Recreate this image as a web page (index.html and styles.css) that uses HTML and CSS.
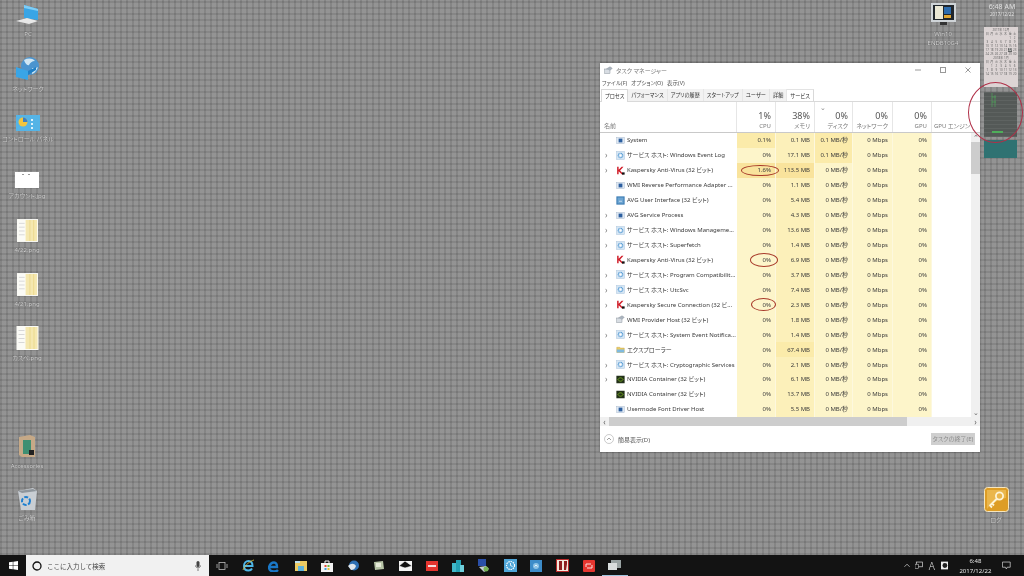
FILE: index.html
```html
<!DOCTYPE html>
<html lang="ja">
<head>
<meta charset="utf-8">
<title>タスク マネージャー</title>
<link rel="stylesheet" href="styles.css">
</head>
<body>
<svg class="defs" width="0" height="0" aria-hidden="true">
  <symbol id="i-sys" viewBox="0 0 12 12"><rect x="1" y="2" width="10" height="8" fill="#dfe8f2" stroke="#9fb4c9" stroke-width=".6"/><rect x="3.5" y="3.5" width="5" height="5" fill="#2c5fa0"/></symbol>
  <symbol id="i-svc" viewBox="0 0 12 12"><rect x=".5" y=".5" width="11" height="11" fill="#d6e6f4" stroke="#a9c4dc" stroke-width=".6"/><circle cx="6" cy="6" r="3" fill="none" stroke="#5c9fd6" stroke-width="1.6" stroke-dasharray="1.4 .5"/><circle cx="6" cy="6" r="1.2" fill="#fff"/></symbol>
  <symbol id="i-kas" viewBox="0 0 12 12"><path d="M1.5 1v10h2V7l4 4h2.500L5.500 6l4.500-5H7.500l-4 4V1z" fill="#d0202c"/><rect x="8" y="8.500" width="3.500" height="3" fill="#111"/></symbol>
  <symbol id="i-avg" viewBox="0 0 12 12"><rect x=".5" y=".5" width="11" height="11" fill="#3d7db5"/><rect x="2" y="2" width="8" height="8" fill="#6da5d2"/><path d="M4 7h4" stroke="#dbe9f5"/></symbol>
  <symbol id="i-wmi" viewBox="0 0 12 12"><rect x="1" y="4" width="7" height="6" fill="#d8dde3" stroke="#808a94" stroke-width=".6"/><path d="M3 4 8 1l3 2-3 3" fill="#aab4be" stroke="#808a94" stroke-width=".5"/></symbol>
  <symbol id="i-exp" viewBox="0 0 12 12"><path d="M1 3h4l1 1h5v6H1z" fill="#eccb63" stroke="#bd9b3a" stroke-width=".5"/><rect x="1" y="6" width="10" height="4" fill="#7fbadf"/></symbol>
  <symbol id="i-nv" viewBox="0 0 12 12"><rect x=".5" y="1" width="11" height="10" fill="#23301a"/><path d="M2.500 6c2-3 5-3 7 0-2 3-5 3-7 0z" fill="none" stroke="#79b51c" stroke-width="1.100"/></symbol>
  <symbol id="i-doc" viewBox="0 0 22 24"><rect width="22" height="24" fill="#fbfbf6"/><rect x="9" y="1" width="12" height="22" fill="#f5e8b0"/><rect x="13" y="1" width="1" height="22" fill="#ecd98e"/><rect x="17" y="1" width="1" height="22" fill="#ecd98e"/><rect x="2" y="4" width="6" height="1" fill="#d8d8d8"/><rect x="2" y="8" width="6" height="1" fill="#d8d8d8"/><rect x="2" y="12" width="6" height="1" fill="#d8d8d8"/><rect x="2" y="16" width="6" height="1" fill="#d8d8d8"/></symbol>
</svg>

<main class="desktop">
  <div class="dicon pos-pc">
    <svg class="dglyph" width="24" height="22" viewBox="0 0 24 22"><path d="M8 1l14 4v11L8 14z" fill="#39a5e6"/><path d="M8 1l14 4v2L8 4z" fill="#7fcdf6"/><path d="M0 17l11-3 11 3-9 3z" fill="#e8e8e8"/></svg>
    <span class="dlabel">PC</span>
  </div>
  <div class="dicon pos-net">
    <svg class="dglyph" width="26" height="24" viewBox="0 0 26 24"><circle cx="15" cy="9" r="9" fill="#4b94cf"/><path d="M9 3c4-2 8-2 11 1-3 0-5 2-6 4-2 1-4-2-5-5zM17 11c3 0 5 0 6-1-1 3-3 6-6 7z" fill="#cfe6f4"/><path d="M1 10l12 4v9L1 20z" fill="#39a5e6"/><path d="M13 14l8-4v3l-8 5z" fill="#1f7fc6"/></svg>
    <span class="dlabel">ネットワーク</span>
  </div>
  <div class="dicon pos-cp">
    <svg class="dglyph" width="24" height="16" viewBox="0 0 24 16"><rect width="24" height="16" fill="#55b4e6"/><circle cx="7" cy="7" r="4.500" fill="#f2c53d"/><path d="M7 7V2.500A4.500 4.500 0 0 1 11.500 7z" fill="#3d7fc2"/><rect x="15" y="4" width="2" height="2" fill="#dff1fb"/><rect x="15" y="8" width="2" height="2" fill="#dff1fb"/><rect x="15" y="12" width="2" height="2" fill="#dff1fb"/></svg>
    <span class="dlabel">コントロール パネル</span>
  </div>
  <div class="dicon pos-acc">
    <svg class="dglyph" width="24" height="16" viewBox="0 0 24 16"><rect width="24" height="16" fill="#fff"/><rect x="7" y="2" width="2" height="1" fill="#999"/><rect x="13" y="2" width="2" height="1" fill="#999"/></svg>
    <span class="dlabel">アカウント.jpg</span>
  </div>
  <div class="dicon pos-p1"><svg class="dglyph" width="21" height="23"><use href="#i-doc"/></svg><span class="dlabel">4/22.png</span></div>
  <div class="dicon pos-p2"><svg class="dglyph" width="21" height="23"><use href="#i-doc"/></svg><span class="dlabel">4/21.png</span></div>
  <div class="dicon pos-p3"><svg class="dglyph" width="23" height="24"><use href="#i-doc"/></svg><span class="dlabel">カスペ.png</span></div>
  <div class="dicon pos-ac">
    <svg class="dglyph" width="18" height="23" viewBox="0 0 18 23"><path d="M1 2l11-2 5 2v20H4l-3-2z" fill="#c6a987"/><rect x="5" y="5" width="8" height="14" fill="#3f8f72"/><rect x="11" y="15" width="5" height="5" fill="#222"/></svg>
    <span class="dlabel">Accessories</span>
  </div>
  <div class="dicon pos-bin">
    <svg class="dglyph" width="20" height="22" viewBox="0 0 20 22"><path d="M1 3l15-3 4 3-2 19H4z" fill="#c9ced3"/><path d="M1 3l15-2 4 2-15 2z" fill="#8e959b"/><circle cx="9" cy="13" r="4" fill="none" stroke="#1d7fd0" stroke-width="2" stroke-dasharray="4 1.500"/></svg>
    <span class="dlabel">ごみ箱</span>
  </div>
  <div class="dicon pos-win">
    <svg class="dglyph" width="25" height="23" viewBox="0 0 25 23"><rect width="25" height="19" fill="#cfd4d8"/><rect x="2" y="2" width="21" height="15" fill="#20262c"/><rect x="4" y="3" width="8" height="13" fill="#e9e7d4"/><rect x="13" y="4" width="7" height="7" fill="#2d6cae"/><rect x="13" y="12" width="7" height="3" fill="#e2a832"/><rect x="9" y="19" width="7" height="3" fill="#333"/></svg>
    <span class="dlabel">Win10<br>ENDB10G4</span>
  </div>
  <div class="dicon pos-key">
    <svg class="dglyph" width="25" height="25" viewBox="0 0 25 25"><rect x=".5" y=".5" width="24" height="24" rx="3" fill="#dd9d26" stroke="#f6e6bf"/><path d="M3 3h19v8C15 12 8 16 3 22z" fill="#eab64c"/><circle cx="15.500" cy="9" r="3.600" fill="none" stroke="#fdf3d6" stroke-width="1.800"/><path d="M13 11.500 5.500 19M8 16.500l2 2M6 18.500l2 2" stroke="#fdf3d6" stroke-width="1.800" fill="none"/></svg>
    <span class="dlabel">ログ</span>
  </div>

  <div class="clock-widget"><div class="cw-time">6:48 AM</div><div class="cw-date">2017/12/22</div></div>
  <div class="calendar">
    <div class="cal-title">2017年 12月</div>
    <div class="cal-grid"><span>日</span><span>月</span><span>火</span><span>水</span><span>木</span><span>金</span><span>土</span><span></span><span></span><span></span><span></span><span></span><span>1</span><span>2</span><span>3</span><span>4</span><span>5</span><span>6</span><span>7</span><span>8</span><span>9</span><span>10</span><span>11</span><span>12</span><span>13</span><span>14</span><span>15</span><span>16</span><span>17</span><span>18</span><span>19</span><span>20</span><span>21</span><span class="cal-today">22</span><span>23</span><span>24</span><span>25</span><span>26</span><span>27</span><span>28</span><span>29</span><span>30</span></div>
    <div class="cal-title">2018年 1月</div>
    <div class="cal-grid"><span>日</span><span>月</span><span>火</span><span>水</span><span>木</span><span>金</span><span>土</span><span></span><span>1</span><span>2</span><span>3</span><span>4</span><span>5</span><span>6</span><span>7</span><span>8</span><span>9</span><span>10</span><span>11</span><span>12</span><span>13</span><span>14</span><span>15</span><span>16</span><span>17</span><span>18</span><span>19</span><span>20</span></div>
  </div>
  <div class="meter">
    <svg width="33" height="45" viewBox="0 0 33 45"><path d="M8 1v14M8 5h4M8 10h4M11 3v12" stroke="#4fae5a" stroke-width=".6" fill="none"/><rect x="8" y="39" width="11" height="2" fill="#4fae5a"/></svg>
  </div>
  <div class="teal"></div>

  <section class="window">
    <header class="titlebar">
      <svg width="9" height="9" viewBox="0 0 12 12"><use href="#i-wmi"/></svg>
      <span class="title">タスク マネージャー</span>
      <div class="winbtns">
        <svg width="6" height="6" viewBox="0 0 6 6"><path d="M0 3h6" stroke="#999"/></svg>
        <svg width="6" height="6" viewBox="0 0 6 6"><rect x=".5" y=".5" width="5" height="5" fill="none" stroke="#999"/></svg>
        <svg width="6" height="6" viewBox="0 0 6 6"><path d="M.5.5l5 5M5.500.5l-5 5" stroke="#999"/></svg>
      </div>
    </header>
    <nav class="menu"><span>ファイル(F)</span><span>オプション(O)</span><span>表示(V)</span></nav>
    <nav class="tabs">
      <span class="tab active">プロセス</span><span class="tab">パフォーマンス</span><span class="tab">アプリの履歴</span><span class="tab">スタートアップ</span><span class="tab">ユーザー</span><span class="tab">詳細</span><span class="tab">サービス</span>
    </nav>
    <div class="table">
      <div class="thead">
        <div class="th th-name"><span class="th-sub">名前</span></div>
        <div class="th"><span class="th-pct">1%</span><span class="th-sub">CPU</span></div>
        <div class="th"><span class="th-pct">38%</span><span class="th-sub">メモリ</span></div>
        <div class="th"><span class="sort">⌄</span><span class="th-pct">0%</span><span class="th-sub">ディスク</span></div>
        <div class="th"><span class="th-pct">0%</span><span class="th-sub">ネットワーク</span></div>
        <div class="th"><span class="th-pct">0%</span><span class="th-sub">GPU</span></div>
        <div class="th th-last"><span class="th-sub">GPU エンジン</span></div>
      </div>
      <div class="tbody">
        <div class="rows">
          <div class="row"><div class="name"><i class="ex"></i><svg class="ri"><use href="#i-sys"/></svg><span class="nm">System</span></div><div class="c h2">0.1%</div><div class="c h1">0.1 MB</div><div class="c h2">0.1 MB/秒</div><div class="c">0 Mbps</div><div class="c">0%</div></div>
          <div class="row"><div class="name"><i class="ex">›</i><svg class="ri"><use href="#i-svc"/></svg><span class="nm">サービス ホスト: Windows Event Log</span></div><div class="c">0%</div><div class="c h1">17.1 MB</div><div class="c h2">0.1 MB/秒</div><div class="c">0 Mbps</div><div class="c">0%</div></div>
          <div class="row"><div class="name"><i class="ex">›</i><svg class="ri"><use href="#i-kas"/></svg><span class="nm">Kaspersky Anti-Virus (32 ビット)</span></div><div class="c h3">1.6%</div><div class="c h3">113.5 MB</div><div class="c">0 MB/秒</div><div class="c">0 Mbps</div><div class="c">0%</div></div>
          <div class="row"><div class="name"><i class="ex"></i><svg class="ri"><use href="#i-sys"/></svg><span class="nm">WMI Reverse Performance Adapter ...</span></div><div class="c">0%</div><div class="c h1">1.1 MB</div><div class="c">0 MB/秒</div><div class="c">0 Mbps</div><div class="c">0%</div></div>
          <div class="row"><div class="name"><i class="ex"></i><svg class="ri"><use href="#i-avg"/></svg><span class="nm">AVG User Interface (32 ビット)</span></div><div class="c">0%</div><div class="c h1">5.4 MB</div><div class="c">0 MB/秒</div><div class="c">0 Mbps</div><div class="c">0%</div></div>
          <div class="row"><div class="name"><i class="ex">›</i><svg class="ri"><use href="#i-sys"/></svg><span class="nm">AVG Service Process</span></div><div class="c">0%</div><div class="c h1">4.3 MB</div><div class="c">0 MB/秒</div><div class="c">0 Mbps</div><div class="c">0%</div></div>
          <div class="row"><div class="name"><i class="ex">›</i><svg class="ri"><use href="#i-svc"/></svg><span class="nm">サービス ホスト: Windows Manageme...</span></div><div class="c">0%</div><div class="c h1">13.6 MB</div><div class="c">0 MB/秒</div><div class="c">0 Mbps</div><div class="c">0%</div></div>
          <div class="row"><div class="name"><i class="ex">›</i><svg class="ri"><use href="#i-svc"/></svg><span class="nm">サービス ホスト: Superfetch</span></div><div class="c">0%</div><div class="c h1">1.4 MB</div><div class="c">0 MB/秒</div><div class="c">0 Mbps</div><div class="c">0%</div></div>
          <div class="row"><div class="name"><i class="ex"></i><svg class="ri"><use href="#i-kas"/></svg><span class="nm">Kaspersky Anti-Virus (32 ビット)</span></div><div class="c">0%</div><div class="c h1">6.9 MB</div><div class="c">0 MB/秒</div><div class="c">0 Mbps</div><div class="c">0%</div></div>
          <div class="row"><div class="name"><i class="ex">›</i><svg class="ri"><use href="#i-svc"/></svg><span class="nm">サービス ホスト: Program Compatibilit...</span></div><div class="c">0%</div><div class="c h1">3.7 MB</div><div class="c">0 MB/秒</div><div class="c">0 Mbps</div><div class="c">0%</div></div>
          <div class="row"><div class="name"><i class="ex">›</i><svg class="ri"><use href="#i-svc"/></svg><span class="nm">サービス ホスト: UtcSvc</span></div><div class="c">0%</div><div class="c h1">7.4 MB</div><div class="c">0 MB/秒</div><div class="c">0 Mbps</div><div class="c">0%</div></div>
          <div class="row"><div class="name"><i class="ex">›</i><svg class="ri"><use href="#i-kas"/></svg><span class="nm">Kaspersky Secure Connection (32 ビ...</span></div><div class="c">0%</div><div class="c h1">2.3 MB</div><div class="c">0 MB/秒</div><div class="c">0 Mbps</div><div class="c">0%</div></div>
          <div class="row"><div class="name"><i class="ex"></i><svg class="ri"><use href="#i-wmi"/></svg><span class="nm">WMI Provider Host (32 ビット)</span></div><div class="c">0%</div><div class="c h1">1.8 MB</div><div class="c">0 MB/秒</div><div class="c">0 Mbps</div><div class="c">0%</div></div>
          <div class="row"><div class="name"><i class="ex">›</i><svg class="ri"><use href="#i-svc"/></svg><span class="nm">サービス ホスト: System Event Notifica...</span></div><div class="c">0%</div><div class="c h1">1.4 MB</div><div class="c">0 MB/秒</div><div class="c">0 Mbps</div><div class="c">0%</div></div>
          <div class="row"><div class="name"><i class="ex"></i><svg class="ri"><use href="#i-exp"/></svg><span class="nm">エクスプローラー</span></div><div class="c">0%</div><div class="c h2">67.4 MB</div><div class="c">0 MB/秒</div><div class="c">0 Mbps</div><div class="c">0%</div></div>
          <div class="row"><div class="name"><i class="ex">›</i><svg class="ri"><use href="#i-svc"/></svg><span class="nm">サービス ホスト: Cryptographic Services</span></div><div class="c">0%</div><div class="c h1">2.1 MB</div><div class="c">0 MB/秒</div><div class="c">0 Mbps</div><div class="c">0%</div></div>
          <div class="row"><div class="name"><i class="ex">›</i><svg class="ri"><use href="#i-nv"/></svg><span class="nm">NVIDIA Container (32 ビット)</span></div><div class="c">0%</div><div class="c h1">6.1 MB</div><div class="c">0 MB/秒</div><div class="c">0 Mbps</div><div class="c">0%</div></div>
          <div class="row"><div class="name"><i class="ex"></i><svg class="ri"><use href="#i-nv"/></svg><span class="nm">NVIDIA Container (32 ビット)</span></div><div class="c">0%</div><div class="c h1">13.7 MB</div><div class="c">0 MB/秒</div><div class="c">0 Mbps</div><div class="c">0%</div></div>
          <div class="row"><div class="name"><i class="ex"></i><svg class="ri"><use href="#i-sys"/></svg><span class="nm">Usermode Font Driver Host</span></div><div class="c">0%</div><div class="c h1">5.5 MB</div><div class="c">0 MB/秒</div><div class="c">0 Mbps</div><div class="c">0%</div></div>
        </div>
        <div class="vscroll"><span class="arr">⌃</span><div class="vthumb"></div><span class="arr">⌄</span></div>
      </div>
      <div class="hscroll"><span class="harr">‹</span><div class="hthumb"></div><span class="harr">›</span></div>
    </div>
    <footer class="winfoot">
      <span class="collapse"><svg width="10" height="10" viewBox="0 0 10 10"><circle cx="5" cy="5" r="4.500" fill="none" stroke="#aaa" stroke-width=".6"/><path d="M3 6l2-2 2 2" fill="none" stroke="#777" stroke-width=".7"/></svg>簡易表示(D)</span>
      <span class="endtask">タスクの終了(E)</span>
    </footer>
  </section>

  <div class="oval ov-big"></div>
  <div class="oval ov-16"></div>
  <div class="oval ov-a"></div>
  <div class="oval ov-b"></div>
</main>

<footer class="taskbar">
  <div class="start"><svg width="9" height="9" viewBox="0 0 10 10"><path d="M0 1.400 4.200.8v3.900H0zM4.800.7 10 0v4.700H4.800zM0 5.300h4.200v3.900L0 8.600zM4.800 5.300H10V10l-5.200-.7z" fill="#fff"/></svg></div>
  <div class="search">
    <svg width="10" height="10" viewBox="0 0 10 10"><circle cx="5" cy="5" r="4" fill="none" stroke="#111" stroke-width="1.300"/></svg>
    <span class="stext">ここに入力して検索</span>
    <svg width="6" height="10" viewBox="0 0 6 10"><rect x="1.500" y="0" width="3" height="6" rx="1.500" fill="#444"/><path d="M.5 4.500c0 3 5 3 5 0M3 7.500V10" stroke="#444" stroke-width=".7" fill="none"/></svg>
  </div>
  <div class="tb-apps">
    <span class="tb"><svg width="12" height="10" viewBox="0 0 12 10"><rect x="3" y="1.500" width="6" height="7" fill="none" stroke="#bbb" stroke-width=".8"/><path d="M1 3v4M11 3v4" stroke="#bbb" stroke-width=".8"/></svg></span>
    <span class="tb"><svg width="13" height="13" viewBox="0 0 13 13"><path d="M2 7h8.500C10.500 4 9 2 6.500 2S2 4 2 7c0 3 2 4.500 4.500 4.500 2 0 3-1 3.500-2" fill="none" stroke="#4fb7e8" stroke-width="2"/><path d="M1 11C3 6 8 2 12 1" stroke="#e9c53a" stroke-width=".8" fill="none"/></svg></span>
    <span class="tb"><svg width="12" height="12" viewBox="0 0 12 12"><path d="M1 7h8C9 4 8 2.500 6 2.500S2 4 1 7c0 3 2 4.500 5 4.500 2 0 3-.5 4-1.500" fill="none" stroke="#1a78c8" stroke-width="2.400"/></svg></span>
    <span class="tb"><svg width="12" height="11" viewBox="0 0 12 11"><rect y="1" width="12" height="10" fill="#eccb63"/><rect x="3" y="6" width="6" height="5" fill="#5fb3dc"/><rect y="1" width="5" height="2" fill="#bde0ee"/></svg></span>
    <span class="tb"><svg width="12" height="12" viewBox="0 0 12 12"><rect y="3" width="12" height="9" fill="#f3f3f3"/><path d="M4 3V1h4v2" fill="none" stroke="#f3f3f3"/><rect x="3.500" y="5" width="2" height="2" fill="#e34a3a"/><rect x="6.500" y="5" width="2" height="2" fill="#6cba3f"/><rect x="3.500" y="8" width="2" height="2" fill="#3c9fdb"/><rect x="6.500" y="8" width="2" height="2" fill="#e9bd32"/></svg></span>
    <span class="tb"><svg width="13" height="13" viewBox="0 0 13 13"><circle cx="7" cy="6.500" r="5" fill="#2d6fb3"/><path d="M1 7c3-3 6-3 8 0-1 3-3 4-5 4z" fill="#dfe6ec"/></svg></span>
    <span class="tb"><svg width="12" height="11" viewBox="0 0 12 11"><path d="M1 2l9-1 1 8-9 1z" fill="#b7c4a6"/><rect x="3" y="3" width="5" height="4" fill="#e6ead9"/></svg></span>
    <span class="tb"><svg width="13" height="10" viewBox="0 0 13 10"><rect width="13" height="10" fill="#f4f4f4"/><path d="M0 5l6-5 7 5-7 2z" fill="#111" stroke="#fff" stroke-width=".6"/></svg></span>
    <span class="tb"><svg width="12" height="10" viewBox="0 0 12 10"><rect width="12" height="10" fill="#e5352f"/><rect x="2" y="4" width="8" height="2" fill="#f7dede"/></svg></span>
    <span class="tb"><svg width="12" height="12" viewBox="0 0 12 12"><rect x="0" y="3" width="5" height="9" fill="#3fb8c9"/><rect x="4" y="0" width="5" height="12" fill="#23a0b3"/><rect x="8" y="5" width="4" height="7" fill="#6fd0dc"/></svg></span>
    <span class="tb"><svg width="13" height="13" viewBox="0 0 13 13"><rect x="1" y="0" width="8" height="7" fill="#2a4fa8"/><path d="M2 8l7-1 3 3-5 3z" fill="#c5ced6"/><circle cx="9" cy="10" r="2.500" fill="#77b255"/></svg></span>
    <span class="tb"><svg width="13" height="13" viewBox="0 0 13 13"><rect width="13" height="13" fill="#4fa6d9"/><circle cx="6.500" cy="6.500" r="4" fill="none" stroke="#fff" stroke-width="1.200" stroke-dasharray="1.500 .8"/><path d="M6.500 4v2.500l2 1" stroke="#fff" fill="none" stroke-width=".8"/></svg></span>
    <span class="tb"><svg width="12" height="12" viewBox="0 0 12 12"><rect width="12" height="12" fill="#3d8cc9"/><circle cx="6" cy="6" r="3" fill="#8dc3e6"/><path d="M4.500 6.500 6 5l1.500 1.500" stroke="#fff" fill="none" stroke-width=".8"/></svg></span>
    <span class="tb"><svg width="13" height="13" viewBox="0 0 13 13"><rect width="13" height="13" fill="#b92a2a"/><rect x="1" y="1" width="11" height="11" fill="#f3e9dd"/><path d="M3 2h3v9H3zM8 2h3v3l-1 6H8z" fill="#8e1e1e"/></svg></span>
    <span class="tb"><svg width="12" height="12" viewBox="0 0 12 12"><rect width="12" height="12" rx="1" fill="#e5352f"/><path d="M3 7V4h5M9 5v3H4" stroke="#f7dede" fill="none"/></svg></span>
    <span class="tb tb-active"><svg width="13" height="11" viewBox="0 0 13 11"><rect x="3" y="0" width="10" height="8" fill="#9aa3a3"/><rect x="0" y="3" width="9" height="7" fill="#d9dddd"/></svg></span>
  </div>
  <div class="tray">
    <svg width="7" height="5" viewBox="0 0 7 5"><path d="M.5 4 3.500 1l3 3" fill="none" stroke="#ddd" stroke-width=".8"/></svg>
    <svg width="9" height="9" viewBox="0 0 9 9"><rect x="1.500" y="0.500" width="7" height="5.500" fill="none" stroke="#ddd" stroke-width=".8"/><rect x="0" y="3" width="4" height="5" fill="#111" stroke="#ddd" stroke-width=".6"/></svg>
    <span class="ime">A</span>
    <svg width="9" height="9" viewBox="0 0 9 9"><rect width="9" height="9" fill="#f0f0f0"/><circle cx="4.500" cy="4.500" r="2.800" fill="#222"/></svg>
    <div class="tclock"><span>6:48</span><span>2017/12/22</span></div>
    <svg width="10" height="9" viewBox="0 0 10 9"><path d="M.5.500h9v6H6l-1 2-1-2H.5z" fill="none" stroke="#ddd" stroke-width=".8"/></svg>
  </div>
</footer>
</body>
</html>
```
FILE: styles.css
```css
* { box-sizing: border-box; }
html, body { margin: 0; height: 100%; }
body {
  width: 1024px;
  height: 576px;
  overflow: hidden;
  display: flex;
  flex-direction: column;
  font-family: "Noto Sans", "Noto Sans CJK JP", sans-serif;
  font-feature-settings: "palt";
  color: #333;
  filter: blur(.25px);
}
.defs { position: absolute; }

.desktop {
  flex: 1;
  position: relative;
  background-color: #8b8b8b;
  background-image:
    repeating-linear-gradient(90deg, rgba(60,60,60,.13) 0 2px, rgba(255,255,255,.04) 2px 6px),
    repeating-linear-gradient(0deg, rgba(60,60,60,.13) 0 2px, rgba(255,255,255,.04) 2px 6px);
}

/* desktop icons sit on a free canvas */
.dicon {
  position: absolute;
  width: 60px;
  display: flex;
  flex-direction: column;
  align-items: center;
  gap: 4px;
}
.dlabel {
  font-size: 6px;
  line-height: 9px;
  color: #dcdcdc;
  text-align: center;
  text-shadow: 0 0 1px #333;
  white-space: nowrap;
}
.pos-pc { left: -2px; top: 4px; }
.pos-net { left: -2px; top: 57px; }
.pos-cp { left: -2px; top: 115px; }
.pos-acc { left: -3px; top: 172px; }
.pos-p1 { left: -3px; top: 219px; }
.pos-p2 { left: -3px; top: 273px; }
.pos-p3 { left: -3px; top: 326px; }
.pos-ac { left: -3px; top: 435px; }
.pos-bin { left: -3px; top: 488px; }
.pos-win { left: 913px; top: 3px; }
.pos-key { left: 966px; top: 487px; }

.clock-widget {
  position: absolute;
  left: 980px;
  top: 2px;
  width: 44px;
  text-align: center;
  color: #e0e0e0;
}
.cw-time { font-size: 7px; line-height: 9px; }
.cw-date { font-size: 4.500px; line-height: 6px; }

.calendar {
  position: absolute;
  left: 984px;
  top: 27px;
  width: 34px;
  height: 60px;
  background: #dcd4d4;
  color: #666;
  font-size: 3px;
  line-height: 4px;
  padding: 1px;
}
.cal-title { text-align: center; }
.cal-grid { display: grid; grid-template-columns: repeat(7, 1fr); text-align: center; }
.cal-today { background: #666; color: #fff; }

.meter {
  position: absolute;
  left: 984px;
  top: 92px;
  width: 33px;
  height: 45px;
  background-color: #545957;
  background-image: repeating-linear-gradient(0deg, rgba(255,255,255,.06) 0 1px, transparent 1px 4px);
}
.meter svg { display: block; }
.teal {
  position: absolute;
  left: 984px;
  top: 140px;
  width: 33px;
  height: 18px;
  background: #2f7272;
}

/* window */
.window {
  position: absolute;
  left: 600px;
  top: 63px;
  width: 380px;
  height: 389px;
  background: #fff;
  display: flex;
  flex-direction: column;
  box-shadow: 0 0 2px rgba(0,0,0,.4);
  font-size: 6px;
}
.titlebar {
  height: 14px;
  display: flex;
  align-items: center;
  gap: 3px;
  padding: 0 0 0 4px;
  color: #777;
}
.winbtns {
  margin-left: auto;
  display: flex;
  gap: 19px;
  padding-right: 9px;
}
.winbtns svg { display: block; }
.menu {
  height: 12px;
  display: flex;
  align-items: center;
  gap: 4px;
  padding-left: 2px;
  color: #555;
  font-size: 5.500px;
}
.tabs {
  height: 13px;
  display: flex;
  align-items: stretch;
  background: #fff;
  border-bottom: 1px solid #d9d9d9;
  padding-left: 1px;
  font-size: 5.200px;
}
.tab {
  display: flex;
  align-items: center;
  padding: 0 3px;
  color: #333;
  background: #f2f2f2;
  border-right: 1px solid #e6e6e6;
  white-space: nowrap;
}
.tab.active {
  background: #fff;
  border: 1px solid #d9d9d9;
  border-bottom: 0;
  height: 13px;
}
.tab:last-child { background: #fff; border-right: 1px solid #d9d9d9; border-top: 1px solid #e3e3e3; }

.table { flex: 1; display: flex; flex-direction: column; min-height: 0; }
.thead {
  height: 31px;
  flex: none;
  display: grid;
  grid-template-columns: 137px 39px 39px 38px 40px 39px 1fr;
  border-bottom: 1px solid #c9c9c9;
}
.th {
  position: relative;
  display: flex;
  flex-direction: column;
  justify-content: flex-end;
  align-items: flex-end;
  padding: 0 4px 1px;
  border-right: 1px solid #e6e6e6;
  color: #7a7a7a;
}
.th-name { align-items: flex-start; }
.th-last { border-right: 0; align-items: flex-start; padding-left: 2px; }
.th-pct { font-size: 9px; line-height: 11px; color: #555; }
.th-sub { font-size: 6px; line-height: 10px; white-space: nowrap; }
.sort { position: absolute; left: 5px; top: 3px; font-size: 7px; line-height: 6px; color: #888; }

.tbody { flex: none; height: 284px; display: flex; }
.rows { flex: 1; min-width: 0; display: flex; flex-direction: column; }
.row {
  height: 14.940px;
  flex: none;
  display: grid;
  grid-template-columns: 137px 39px 39px 38px 40px 39px;
  align-items: stretch;
  color: #3a3a3a;
  line-height: 10px;
}
.name { display: flex; align-items: center; }
.ex { width: 16px; padding-left: 5px; font-style: normal; font-size: 8px; color: #777; flex: none; }
.ri { width: 9px; height: 9px; flex: none; margin-right: 2px; }
.nm { white-space: nowrap; font-size: 6px; }
.c {
  background: #fdf5ca;
  display: flex;
  align-items: center;
  justify-content: flex-end;
  padding-right: 4px;
  white-space: nowrap;
  border-right: 1px solid #fdf8de;
}
.h1 { background: #fcf0ba; }
.h2 { background: #fbebaa; }
.h3 { background: #f9e39c; }

.vscroll {
  width: 9px;
  margin-left: auto;
  background: #f0f0f0;
  display: flex;
  flex-direction: column;
  align-items: center;
  font-size: 7px;
  color: #666;
}
.arr { height: 9px; line-height: 9px; }
.vthumb { width: 100%; height: 32px; background: #cdcdcd; margin-bottom: auto; }

.hscroll {
  height: 9px;
  flex: none;
  background: #f0f0f0;
  display: flex;
  align-items: center;
  color: #666;
  font-size: 8px;
  line-height: 8px;
}
.harr { width: 9px; text-align: center; flex: none; }
.hthumb { width: 298px; height: 100%; background: #cdcdcd; margin-right: auto; }

.winfoot {
  height: 26px;
  display: flex;
  align-items: center;
  justify-content: space-between;
  padding: 0 5px 0 4px;
  color: #555;
}
.collapse { display: flex; align-items: center; gap: 4px; }
.endtask {
  background: #cfcfcf;
  color: #8d8d8d;
  height: 12px;
  line-height: 12px;
  width: 44px;
  text-align: center;
  white-space: nowrap;
}

/* hand-drawn annotations on the screenshot */
.oval { position: absolute; border: 1px solid #a83a2a; border-radius: 50%; }
.ov-big { left: 968px; top: 82px; width: 55px; height: 61px; border-color: #b03048; }
.ov-16 { left: 741px; top: 165px; width: 38px; height: 11px; }
.ov-a { left: 750px; top: 253px; width: 28px; height: 14px; }
.ov-b { left: 751px; top: 298px; width: 25px; height: 13px; }

/* taskbar */
.taskbar {
  height: 21px;
  flex: none;
  background: #131313;
  display: flex;
  align-items: stretch;
  color: #e6e6e6;
}
.start { width: 26px; display: flex; align-items: center; justify-content: center; }
.search {
  width: 183px;
  background: #f1f1f1;
  display: flex;
  align-items: center;
  gap: 5px;
  padding: 0 8px 0 6px;
  color: #444;
  font-size: 6.500px;
  font-feature-settings: normal;
}
.stext { flex: 1; font-family: "Noto Sans CJK JP", sans-serif; }
.tb-apps { display: flex; }
.tb { width: 26.200px; display: flex; align-items: center; justify-content: center; }
.tb-active { box-shadow: inset 0 -1px 0 #9fc3dd; }
.tray {
  margin-left: auto;
  width: 124px;
  display: flex;
  align-items: center;
  gap: 5px;
  padding: 0 13px 0 4px;
}
.ime { font-size: 10px; font-weight: 300; width: 9px; text-align: center; }
.tclock {
  display: flex;
  flex-direction: column;
  align-items: center;
  font-size: 6px;
  line-height: 10px;
  margin: 0 6px;
  white-space: nowrap;
  width: 36px;
}
```
